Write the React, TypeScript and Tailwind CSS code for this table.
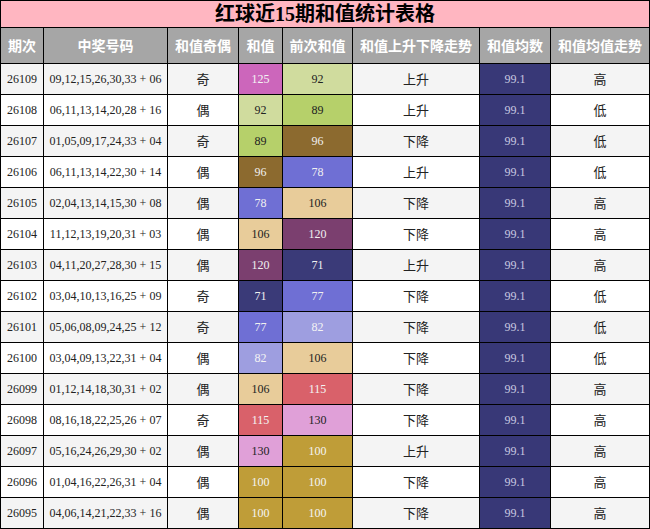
import React from "react";

const rows: [string, string, string, number, number, string, string][] = [
  ["26109", "09,12,15,26,30,33 + 06", "奇", 125, 92, "上升", "高"],
  ["26108", "06,11,13,14,20,28 + 16", "偶", 92, 89, "上升", "低"],
  ["26107", "01,05,09,17,24,33 + 04", "奇", 89, 96, "下降", "低"],
  ["26106", "06,11,13,14,22,30 + 14", "偶", 96, 78, "上升", "低"],
  ["26105", "02,04,13,14,15,30 + 08", "偶", 78, 106, "下降", "高"],
  ["26104", "11,12,13,19,20,31 + 03", "偶", 106, 120, "下降", "高"],
  ["26103", "04,11,20,27,28,30 + 15", "偶", 120, 71, "上升", "高"],
  ["26102", "03,04,10,13,16,25 + 09", "奇", 71, 77, "下降", "低"],
  ["26101", "05,06,08,09,24,25 + 12", "奇", 77, 82, "下降", "低"],
  ["26100", "03,04,09,13,22,31 + 04", "偶", 82, 106, "下降", "低"],
  ["26099", "01,12,14,18,30,31 + 02", "偶", 106, 115, "下降", "高"],
  ["26098", "08,16,18,22,25,26 + 07", "奇", 115, 130, "下降", "高"],
  ["26097", "05,16,24,26,29,30 + 02", "偶", 130, 100, "上升", "高"],
  ["26096", "01,04,16,22,26,31 + 04", "偶", 100, 100, "下降", "高"],
  ["26095", "04,06,14,21,22,33 + 16", "偶", 100, 100, "下降", "高"],
];

const colorClass: Record<number, string> = {
  125: "bg-[#cc66bb] text-[#f4f4f4]",
  92: "bg-[#d0dc9e] text-[#222222]",
  89: "bg-[#b6d06a] text-[#222222]",
  96: "bg-[#8c6a2f] text-[#f0f0f0]",
  78: "bg-[#6f6fd4] text-[#f0f0f0]",
  106: "bg-[#e8cc9a] text-[#222222]",
  120: "bg-[#7b3f6f] text-[#f0f0f0]",
  71: "bg-[#3a3a78] text-[#f0f0f0]",
  77: "bg-[#6f6fd4] text-[#f0f0f0]",
  82: "bg-[#9e9ee0] text-[#f4f4f4]",
  115: "bg-[#d9616a] text-[#f4f4f4]",
  130: "bg-[#e0a0d8] text-[#222222]",
  100: "bg-[#bf9d38] text-[#f4f4f4]",
};

const headers = ["期次", "中奖号码", "和值奇偶", "和值", "前次和值", "和值上升下降走势", "和值均数", "和值均值走势"];

const serif = "font-['Liberation_Serif','Noto_Sans_CJK_SC',serif]";

export default function App() {
  return (
    <div className="w-[650px] h-[529px] bg-white">
      <div className="grid grid-cols-[42px_123px_70px_43px_69px_126px_70px_98px] grid-rows-[26px_35px_repeat(15,30px)] gap-px p-px bg-black w-[650px]">
        <div className={`col-span-8 bg-[#ffb6c1] flex items-center justify-center text-[20px] font-bold text-black ${serif}`}>
          红球近15期和值统计表格
        </div>
        {headers.map((h) => (
          <div
            key={h}
            className="bg-[#a6a6a6] flex items-center justify-center text-[14px] font-bold text-white font-['Noto_Sans_CJK_SC',sans-serif]"
          >
            {h}
          </div>
        ))}
        {rows.map((r, i) => {
          const rowBg = i % 2 === 0 ? "bg-[#f4f4f4]" : "bg-white";
          return (
            <React.Fragment key={r[0]}>
              <div className={`${rowBg} flex items-center justify-center text-[12px] text-[#222222] ${serif}`}>{r[0]}</div>
              <div className={`${rowBg} flex items-center justify-center text-[12px] text-[#222222] ${serif}`}>{r[1]}</div>
              <div className={`${rowBg} flex items-center justify-center text-[13px] text-[#222222] font-['Noto_Sans_CJK_SC',sans-serif]`}>{r[2]}</div>
              <div className={`${colorClass[r[3]]} flex items-center justify-center text-[12px] ${serif}`}>{r[3]}</div>
              <div className={`${colorClass[r[4]]} flex items-center justify-center text-[12px] ${serif}`}>{r[4]}</div>
              <div className={`${rowBg} flex items-center justify-center text-[13px] text-[#222222] font-['Noto_Sans_CJK_SC',sans-serif]`}>{r[5]}</div>
              <div className={`bg-[#383877] flex items-center justify-center text-[12px] text-[#c8c8e0] ${serif}`}>99.1</div>
              <div className={`${rowBg} flex items-center justify-center text-[13px] text-[#222222] font-['Noto_Sans_CJK_SC',sans-serif]`}>{r[6]}</div>
            </React.Fragment>
          );
        })}
      </div>
    </div>
  );
}
